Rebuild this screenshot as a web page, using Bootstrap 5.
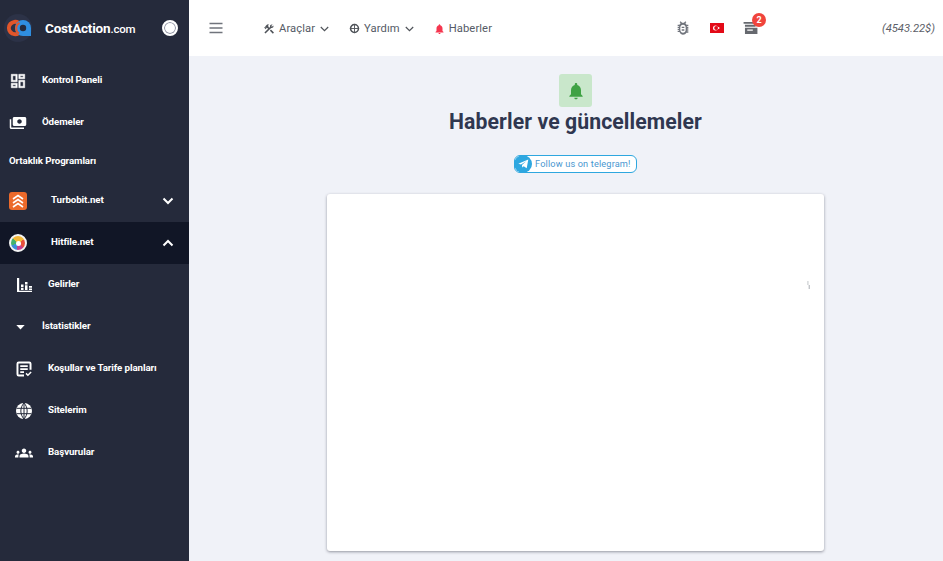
<!DOCTYPE html>
<html lang="tr">
<head>
  <meta charset="UTF-8" />
  <meta name="viewport" content="width=device-width, initial-scale=1.0"/>
  <title>CostAction.com</title>
  <link href="https://cdn.jsdelivr.net/npm/bootstrap@5.3.6/dist/css/bootstrap.min.css" rel="stylesheet">
  <style>
    html, body { height: 100%; overflow: hidden; }
    body {
      background-color: #f0f2f8;
      font-family: Roboto, "Liberation Sans", sans-serif;
    }
    .app-wrap { height: 561px; }

    .side {
      width: 189px;
      background-color: #252a3b;
      color: #fff;
    }
    .side-brand { height: 56px; padding: 0 11px 0 4px; }
    .brand-name { font-size: 13.5px; font-weight: 700; margin-left: 13px; letter-spacing: -.2px; }
    .brand-name em { font-style: normal; font-size: 11.5px; font-weight: 500; }
    .brand-toggle {
      width: 16px; height: 16px; border-radius: 50%;
      background: #fff; border: 2px solid #fff;
      box-shadow: inset 0 0 0 1px #8d90a0;
    }
    .side-item {
      height: 42px;
      font-size: 9.75px;
      font-weight: 700;
      color: #fff;
      text-decoration: none;
      letter-spacing: -.1px;
    }
    .side-item svg { fill: #fff; flex: none; }
    .side-label { margin-bottom: 1px; }
    .side-top { padding-left: 9px; }
    .side-top .side-label { margin-left: 15px; }
    .side-title { height: 36px; padding-left: 9px; padding-bottom: 1px; }
    .side-prod { padding: 0 15px 0 9px; }
    .side-prod .side-label { margin-left: 24px; }
    .side-prod.is-open { background-color: #111626; }
    .side-sub { padding-left: 15px; }
    .side-sub .side-label { margin-left: 15px; }
    .side-sub.has-caret { padding-left: 16px; }
    .side-sub.has-caret .side-label { margin-left: 17px; }
    .turbo-icon {
      width: 18px; height: 18px; border-radius: 3px; background: #ec6a2b;
      flex: none;
    }
    .hit-icon {
      width: 18px; height: 18px; border-radius: 50%; flex: none;
      background: conic-gradient(#f4b93a 0 60deg, #e8503c 60deg 130deg, #c63f8f 130deg 190deg, #3f8fd8 190deg 250deg, #45b36b 250deg 310deg, #f4b93a 310deg);
      border: 2px solid #f4f4f4;
      display: flex; align-items: center; justify-content: center;
    }
    .hit-icon span { width: 5px; height: 5px; background: #fff; border-radius: 50%; }

    .top-bar {
      height: 56px;
      background-color: #fff;
      padding: 0;
      flex-wrap: nowrap;
    }
    .top-link {
      color: #555b66;
      font-size: 11.2px;
      line-height: 18px;
      padding-top: 1px;
      text-decoration: none;
      letter-spacing: .1px;
    }
    .top-link svg { flex: none; }
    .menu-btn { margin-left: 17px; padding-top: 0; }
    .tools-link { margin-left: 37px; }
    .help-link, .news-link { margin-left: 20px; }
    .caret-down { margin-left: 1px; }
    .balance { color: #5c6068; font-size: 11.2px; font-style: italic; position: absolute; right: 8px; top: 21px; }
    .top-right { position: relative; flex: 1; height: 56px; }
    .toolset { margin-left: 183px; gap: 19px; }
    .cart-badge {
      position: absolute; top: -9px; left: 9px;
      width: 14px; height: 14px; border-radius: 50%;
      background: #f0443c; color: #fff;
      font-size: 9px; font-weight: 700; line-height: 14px; text-align: center;
    }
    .flag-box { width: 14px; height: 10px; }

    .news-body { padding: 18px 0 0 19px; }
    .bell-tile {
      width: 33px; height: 33px; border-radius: 3px; background: #c9e7cb;
    }
    .news-title {
      font-size: 21.2px; font-weight: 700; color: #2f3750; margin: 0;
      line-height: 30px; letter-spacing: .1px;
    }
    .tg-pill {
      margin-top: 18px;
      height: 18px;
      width: 123px;
      background: #fff;
      border: 1px solid #2ea7df;
      border-radius: 6px;
      color: #4a97d0;
      font-size: 9.2px;
      text-decoration: none;
      letter-spacing: .15px;
      position: relative;
      padding-left: 20px;
    }
    .tg-ball {
      position: absolute; left: -1px; top: -1px;
      width: 18px; height: 18px; border-radius: 50%;
      background: #2ea7e0;
    }
    .news-panel {
      width: 497px; height: 357px; margin-top: 21px;
      background: #fff; border: 0; border-radius: 3px;
      box-shadow: 0 1px 3px rgba(30,35,50,.45);
    }
    .loader-bit { width: 3px; height: 8px; margin: 87px 14px 0 0; }
  </style>
</head>
<body>
  <div class="d-flex app-wrap">
    <aside class="side d-flex flex-column flex-shrink-0">
      <div class="side-brand d-flex align-items-center">
        <svg width="28" height="28" viewBox="0 0 28 28">
          <circle cx="14" cy="14" r="14" fill="#2c3247"/>
          <path d="M14.500 8.800A6.200 6.200 0 1 0 14.500 19.200" fill="none" stroke="#e2562a" stroke-width="4"/>
          <path d="M19 6a8 8 0 1 0 0 16h8v-8a8 8 0 0 0-8-8z" fill="#2f8ee0"/>
          <path d="M15.500 8.800A6.200 6.200 0 0 0 15 19.500" fill="none" stroke="#e2562a" stroke-width="2"/>
          <circle cx="19" cy="14" r="3.200" fill="#252a3b"/>
        </svg>
        <span class="brand-name">CostAction<em>.com</em></span>
        <span class="brand-toggle ms-auto"></span>
      </div>

      <nav class="nav flex-column flex-nowrap mt-1">
        <a class="side-item side-top d-flex align-items-center" href="#">
          <svg width="18" height="18" viewBox="0 0 24 24"><path d="M19 5v2h-4V5h4M9 5v6H5V5h4m10 8v6h-4v-6h4M9 17v2H5v-2h4M21 3h-8v6h8V3zM11 3H3v10h8V3zm10 8h-8v10h8V11zm-10 4H3v6h8v-6z" stroke="#fff" stroke-width=".6"/></svg>
          <span class="side-label">Kontrol Paneli</span>
        </a>
        <a class="side-item side-top d-flex align-items-center" href="#">
          <svg width="18" height="18" viewBox="0 0 24 24" transform="scale(-1 1)"><path d="M19 14V6c0-1.100-.9-2-2-2H3c-1.100 0-2 .9-2 2v8c0 1.100.9 2 2 2h14c1.100 0 2-.9 2-2zm-9-1c-1.660 0-3-1.340-3-3s1.340-3 3-3 3 1.340 3 3-1.340 3-3 3zm13-6v11c0 1.100-.9 2-2 2H4v-2h17V7h2z"/></svg>
          <span class="side-label">Ödemeler</span>
        </a>
        <div class="side-item side-title d-flex align-items-center">Ortaklık Programları</div>
        <a class="side-item side-prod d-flex align-items-center" href="#">
          <span class="turbo-icon d-flex align-items-center justify-content-center">
            <svg width="12" height="14" viewBox="0 0 12 14"><path d="M1 5l5-3.500L11 5M1 9l5-3.500L11 9M1 13l5-3.500L11 13" style="fill:none;stroke:#fff;stroke-width:1.600"/></svg>
          </span>
          <span class="side-label">Turbobit.net</span>
          <svg class="ms-auto" width="12" height="8" viewBox="0 0 12 8"><path d="M1.500 1.500L6 6l4.500-4.500" style="fill:none;stroke:#fff;stroke-width:2"/></svg>
        </a>
        <a class="side-item side-prod is-open d-flex align-items-center" href="#">
          <span class="hit-icon"><span></span></span>
          <span class="side-label">Hitfile.net</span>
          <svg class="ms-auto" width="12" height="8" viewBox="0 0 12 8"><path d="M1.500 6.500L6 2l4.500 4.500" style="fill:none;stroke:#fff;stroke-width:2"/></svg>
        </a>
        <a class="side-item side-sub d-flex align-items-center" href="#">
          <svg width="18" height="18" viewBox="0 0 18 18"><path d="M2 2h2.200v12.800H17V16H2zM6 8.500h2.500v2.500H6zM6 11.800h2.500v2.200H6zM10 6h2.500v2.500H10zM10 9.300h2.500V14H10zM14 10h3v1.800h-3zM14 12.500h3V14h-3z"/></svg>
          <span class="side-label">Gelirler</span>
        </a>
        <a class="side-item side-sub has-caret d-flex align-items-center" href="#">
          <svg width="9" height="5" viewBox="0 0 10 6"><path d="M0 0h10L5 5.500z"/></svg>
          <span class="side-label">İstatistikler</span>
        </a>
        <a class="side-item side-sub d-flex align-items-center" href="#">
          <svg width="18" height="18" viewBox="0 0 24 24"><path d="M5 2h14a3 3 0 0 1 3 3v8h-2.600V5a.4.4 0 0 0-.4-.4H5a.4.4 0 0 0-.4.4v14a.4.4 0 0 0 .4.4h7V22H5a3 3 0 0 1-3-3V5a3 3 0 0 1 3-3zM7 7h10v2.200H7zM7 11h10v2.200H7zM7 15h5v2.200H7zM14 18.500l1.400-1.400 1.800 1.800 3.600-3.600 1.400 1.400-5 5z"/></svg>
          <span class="side-label">Koşullar ve Tarife planları</span>
        </a>
        <a class="side-item side-sub d-flex align-items-center" href="#">
          <svg width="18" height="18" viewBox="0 0 18 18"><circle cx="9" cy="9" r="8"/><path d="M1.500 6.300h15M1.500 11.700h15M9 1v16M9 1C4.800 5.500 4.800 12.500 9 17M9 1c4.200 4.500 4.200 11.500 0 16" style="fill:none;stroke:#252a3b;stroke-width:1"/></svg>
          <span class="side-label">Sitelerim</span>
        </a>
        <a class="side-item side-sub d-flex align-items-center" href="#">
          <svg width="18" height="18" viewBox="0 0 24 24"><path d="M12 12.750c1.630 0 3.070.39 4.240.9 1.080.48 1.760 1.560 1.760 2.730V18H6v-1.610c0-1.180.68-2.260 1.760-2.730 1.170-.52 2.610-.91 4.240-.91zM4 13c1.100 0 2-.9 2-2s-.9-2-2-2-2 .9-2 2 .9 2 2 2zm1.130 1.100c-.37-.06-.74-.1-1.130-.1-.99 0-1.930.21-2.780.58C.48 14.900 0 15.620 0 16.430V18h4.500v-1.610c0-.83.23-1.610.63-2.290zM20 13c1.100 0 2-.9 2-2s-.9-2-2-2-2 .9-2 2 .9 2 2 2zm4 3.430c0-.81-.48-1.530-1.220-1.850-.85-.37-1.790-.58-2.780-.58-.39 0-.76.04-1.130.1.4.68.63 1.460.63 2.290V18H24v-1.570zM12 6c1.660 0 3 1.340 3 3s-1.340 3-3 3-3-1.340-3-3 1.340-3 3-3z"/></svg>
          <span class="side-label">Başvurular</span>
        </a>
      </nav>
    </aside>

    <div class="flex-grow-1 d-flex flex-column">
      <header class="top-bar navbar align-items-center justify-content-start">
        <a class="top-link menu-btn d-flex" href="#">
          <svg width="20" height="20" viewBox="0 0 20 20"><path d="M3.500 5.500h13M3.500 10h13M3.500 14.500h13" fill="none" stroke="#70747c" stroke-width="1.400"/></svg>
        </a>
        <a class="top-link tools-link d-flex align-items-center gap-1" href="#">
          <svg width="12" height="12" viewBox="0 0 24 24" fill="#4f5359"><path d="M13.780 15.300l6 6 2.110-2.160-6-6zM17.500 10c1.930 0 3.500-1.570 3.500-3.500 0-.58-.16-1.120-.41-1.600l-2.700 2.700-1.490-1.490 2.700-2.700c-.48-.25-1.020-.41-1.600-.41C15.570 3 14 4.570 14 6.500c0 .41.08.8.21 1.160l-1.850 1.850-1.780-1.780.71-.71-1.410-1.410L12 3.490a3 3 0 0 0-4.240 0L4.220 7.030l1.410 1.410H2.810l-.71.71 3.540 3.540.71-.71V9.150l1.410 1.410.71-.71 1.780 1.780-7.410 7.410 2.120 2.120L16.340 10.210c.36.130.75.210 1.160.210z"/></svg>
          Araçlar
          <svg class="caret-down" width="9" height="6" viewBox="0 0 9 6"><path d="M.8 1l3.700 3.700L8.200 1" fill="none" stroke="#4f5359" stroke-width="1.200"/></svg>
        </a>
        <a class="top-link help-link d-flex align-items-center gap-1" href="#">
          <svg width="11" height="11" viewBox="0 0 12 12"><circle cx="6" cy="6" r="4.300" fill="none" stroke="#4f5359" stroke-width="1.700"/><path d="M6 1v10M1 6h10" stroke="#4f5359" stroke-width="1"/></svg>
          Yardım
          <svg class="caret-down" width="9" height="6" viewBox="0 0 9 6"><path d="M.8 1l3.700 3.700L8.200 1" fill="none" stroke="#4f5359" stroke-width="1.200"/></svg>
        </a>
        <a class="top-link news-link d-flex align-items-center gap-1" href="#">
          <svg width="11" height="12" viewBox="2 0 20 24" fill="#f5364f"><path d="M12 22c1.100 0 2-.9 2-2h-4c0 1.100.9 2 2 2zm6-6v-5c0-3.070-1.630-5.640-4.500-6.320V4c0-.83-.67-1.500-1.500-1.500s-1.500.67-1.500 1.500v.68C7.640 5.360 6 7.920 6 11v5l-2 2v1h16v-1l-2-2z"/></svg>
          Haberler
        </a>
        <div class="top-right d-flex align-items-center">
          <div class="toolset d-flex align-items-center">
            <svg width="16" height="16" viewBox="0 0 24 24" fill="#70747c"><path d="M14 12h-4v-2h4v2zm0 2h-4v2h4v-2zm6-4h-2.100c-.05-.34-.12-.67-.22-1H20V7h-2.810c-.45-.78-1.070-1.460-1.820-2L17 3.410 15.590 2l-2.170 2.170C12.960 4.060 12.490 4 12 4s-.96.06-1.410.17L8.410 2 7 3.410 8.620 5c-.75.54-1.360 1.220-1.810 2H4v2h2.310c-.1.330-.17.66-.21 1H4v2h2v1H4v2h2.100c.05.34.12.67.21 1H4v2h2.810C7.850 20.790 9.780 22 12 22s4.150-1.210 5.190-3H20v-2h-2.310c.1-.33.17-.66.21-1H20v-2h-2v-1h2v-2zm-4 5c0 2.210-1.790 4-4 4s-4-1.790-4-4v-4c0-2.210 1.790-4 4-4s4 1.790 4 4v4z"/></svg>
            <svg class="flag-box" viewBox="0 0 14 10"><rect width="14" height="10" fill="#e30a17"/><circle cx="5.500" cy="5" r="2.500" fill="#fff"/><circle cx="6.200" cy="5" r="2" fill="#e30a17"/><circle cx="8.600" cy="5" r=".9" fill="#fff"/></svg>
            <span class="position-relative d-flex">
              <svg width="15" height="12" viewBox="0 0 15 13" fill="#66696f"><path d="M0 0h11v1.800H0zM1.500 3H13v2.200H1.500zM1.500 6.200H15V13H1.500zM4 8v1.400h6V8z" fill-rule="evenodd"/></svg>
              <span class="cart-badge">2</span>
            </span>
          </div>
          <span class="balance">(4543.22$)</span>
        </div>
      </header>

      <main class="news-body d-flex flex-column align-items-center">
        <div class="bell-tile d-flex align-items-center justify-content-center">
          <svg width="20" height="20" viewBox="0 0 24 24" fill="#3fa244"><path d="M12 22c1.100 0 2-.9 2-2h-4c0 1.100.9 2 2 2zm6-6v-5c0-3.070-1.630-5.640-4.500-6.320V4c0-.83-.67-1.500-1.500-1.500s-1.500.67-1.500 1.500v.68C7.640 5.360 6 7.920 6 11v5l-2 2v1h16v-1l-2-2z"/></svg>
        </div>
        <h1 class="news-title">Haberler ve güncellemeler</h1>
        <a class="tg-pill d-flex align-items-center" href="#">
          <span class="tg-ball d-flex align-items-center justify-content-center">
            <svg width="11" height="10" viewBox="0 0 11 10"><path d="M.3 4.700L10.300.4 8.700 9.300 5.700 7.200 4.200 8.600 4 6 8.200 2.200 3 5.500z" fill="#fff"/></svg>
          </span>
          Follow us on telegram!
        </a>
        <div class="card news-panel d-flex flex-row align-items-start justify-content-end">
          <svg class="loader-bit" viewBox="0 0 3 8"><path d="M.6 0h.7v4H.6zM1.700 4h1v4h-1z" fill="#a9adb2"/></svg>
        </div>
      </main>
    </div>
  </div>
  <script src="https://cdn.jsdelivr.net/npm/bootstrap@5.3.6/dist/js/bootstrap.bundle.min.js"></script>
</body>
</html>
